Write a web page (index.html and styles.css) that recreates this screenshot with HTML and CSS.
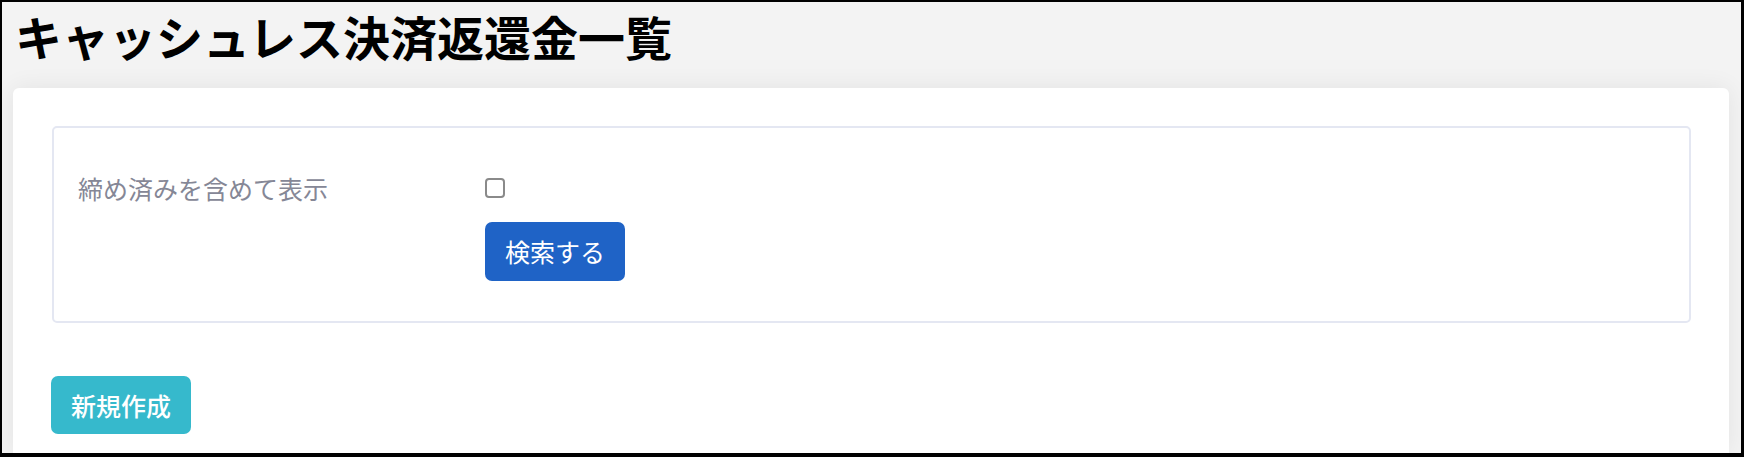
FILE: index.html
```html
<!DOCTYPE html>
<html lang="ja">
<head>
<meta charset="utf-8">
<title>キャッシュレス決済返還金一覧</title>
<link rel="stylesheet" href="styles.css">
</head>
<body>
<div class="frame">
  <h1 class="title">キャッシュレス決済返還金一覧</h1>
  <div class="card">
    <div class="search-box">
      <div class="search-grid">
        <label class="field-label" for="include-closed">締め済みを含めて表示</label>
        <div class="field-control">
          <div class="check-line"><input type="checkbox" id="include-closed" class="check"></div>
          <button type="button" class="btn btn-primary">検索する</button>
        </div>
      </div>
    </div>
    <button type="button" class="btn btn-info">新規作成</button>
  </div>
</div>
</body>
</html>
```
FILE: styles.css
```css
html, body {
  margin: 0;
  padding: 0;
  background: #ffffff;
}
body {
  font-family: "Noto Sans CJK JP", "Noto Sans", sans-serif;
}
.frame {
  box-sizing: border-box;
  width: 1744px;
  height: 457px;
  border-style: solid;
  border-color: #000000;
  border-width: 2px 3px 4px 2px;
  background: #f3f3f3;
  padding: 0 12px 0 11px;
  overflow: hidden;
  display: flex;
  flex-direction: column;
}
.title {
  margin: 10px 0 0 2px;
  font-size: 47px;
  line-height: 47px;
  font-weight: 700;
  color: #000000;
  letter-spacing: 0;
}
.card {
  margin-top: 29px;
  flex: 1;
  background: #ffffff;
  border-radius: 6px 6px 0 0;
  box-shadow: 0 0 24px rgba(0, 0, 0, 0.07);
  padding: 38px 38px 0 39px;
}
.search-box {
  border: 2px solid #e4e7f2;
  border-radius: 5px;
  padding: 42px 24px 40px 24px;
}
.search-grid {
  display: grid;
  grid-template-columns: 407px 1fr;
}
.field-label {
  font-size: 25px;
  line-height: 36px;
  color: #858796;
}
.field-control {
  display: flex;
  flex-direction: column;
  align-items: flex-start;
  gap: 16px;
}
.check-line {
  height: 36px;
  display: flex;
  align-items: center;
}
.check {
  appearance: none;
  -webkit-appearance: none;
  margin: 0;
  width: 20px;
  height: 20px;
  box-sizing: border-box;
  border: 2px solid #8a8a8a;
  border-radius: 4px;
  background: #ffffff;
}
.btn {
  border: none;
  font-family: "Noto Sans CJK JP", "Noto Sans", sans-serif;
  font-size: 25px;
  line-height: 36px;
  padding: 11px 20px 12px 20px;
  border-radius: 7px;
  color: #ffffff;
  cursor: pointer;
}
.btn-primary {
  background: #1f63c6;
  font-weight: 400;
}
.btn-info {
  margin-top: 53px;
  margin-left: -1px;
  background: #36b9cc;
  font-weight: 500;
  padding: 11px 20px 11px 20px;
}
```
